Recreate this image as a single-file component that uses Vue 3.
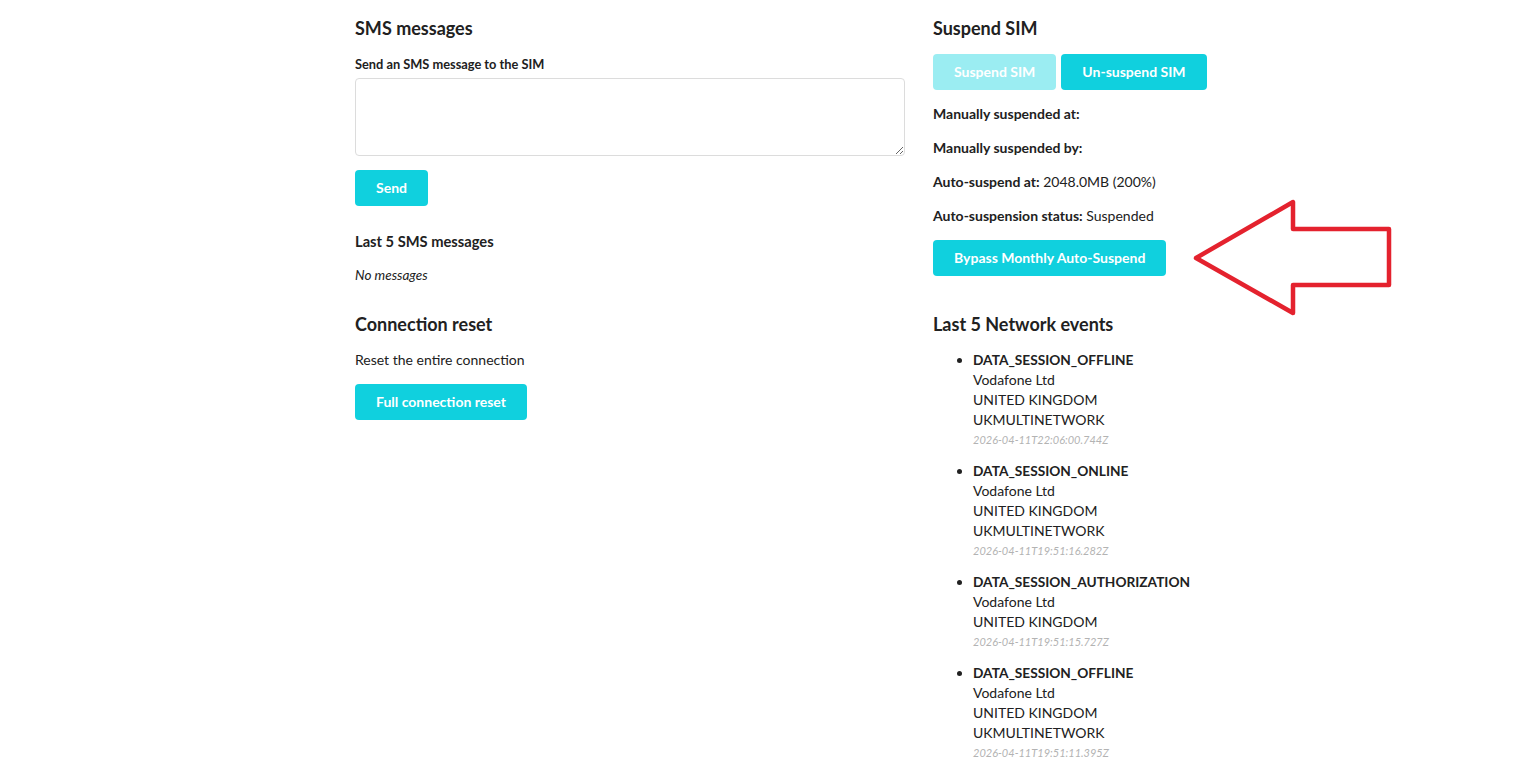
<template>
  <div class="page">
    <div class="columns">
      <section class="col">
        <h3 class="first">SMS messages</h3>
        <label class="field-label">Send an SMS message to the SIM</label>
        <textarea class="sms-input"></textarea>
        <button class="btn send">Send</button>
        <h4>Last 5 SMS messages</h4>
        <p class="empty">No messages</p>
        <h3 class="reset-title">Connection reset</h3>
        <p class="reset-text">Reset the entire connection</p>
        <button class="btn">Full connection reset</button>
      </section>

      <section class="col">
        <h3 class="first">Suspend SIM</h3>
        <div class="btn-row">
          <button class="btn disabled">Suspend SIM</button>
          <button class="btn">Un-suspend SIM</button>
        </div>
        <p v-for="row in suspendInfo" :key="row.label" class="info">
          <strong>{{ row.label }}</strong> {{ row.value }}
        </p>
        <div class="bypass-wrap">
          <button class="btn">Bypass Monthly Auto-Suspend</button>
          <svg class="arrow" width="206" height="126" viewBox="0 0 206 126">
            <path
              d="M7 60 L104 4 L104 31 L200 31 L200 87 L104 87 L104 115 Z"
              fill="none"
              stroke="#e4222e"
              stroke-width="4.5"
              stroke-linejoin="round"
            />
          </svg>
        </div>
        <h3 class="events-title">Last 5 Network events</h3>
        <ul class="events">
          <li v-for="(ev, i) in events" :key="i">
            <strong>{{ ev.type }}</strong>
            <div v-for="line in ev.lines" :key="line">{{ line }}</div>
            <div class="time">{{ ev.time }}</div>
          </li>
        </ul>
      </section>
    </div>
  </div>
</template>

<script setup>
const suspendInfo = [
  { label: "Manually suspended at:", value: "" },
  { label: "Manually suspended by:", value: "" },
  { label: "Auto-suspend at:", value: "2048.0MB (200%)" },
  { label: "Auto-suspension status:", value: "Suspended" },
];

const events = [
  {
    type: "DATA_SESSION_OFFLINE",
    lines: ["Vodafone Ltd", "UNITED KINGDOM", "UKMULTINETWORK"],
    time: "2026-04-11T22:06:00.744Z",
  },
  {
    type: "DATA_SESSION_ONLINE",
    lines: ["Vodafone Ltd", "UNITED KINGDOM", "UKMULTINETWORK"],
    time: "2026-04-11T19:51:16.282Z",
  },
  {
    type: "DATA_SESSION_AUTHORIZATION",
    lines: ["Vodafone Ltd", "UNITED KINGDOM"],
    time: "2026-04-11T19:51:15.727Z",
  },
  {
    type: "DATA_SESSION_OFFLINE",
    lines: ["Vodafone Ltd", "UNITED KINGDOM", "UKMULTINETWORK"],
    time: "2026-04-11T19:51:11.395Z",
  },
];
</script>

<style scoped>
.page {
  font-family: Lato, "Open Sans", sans-serif;
  font-size: 14px;
  line-height: 20px;
  color: #212121;
  padding: 16px 0 0 355px;
}

.columns {
  display: grid;
  grid-template-columns: 550px 550px;
  column-gap: 28px;
}

.col {
  display: flex;
  flex-direction: column;
  align-items: flex-start;
}

h3 {
  font-size: 18px;
  line-height: 24px;
  font-weight: 700;
  margin: 0;
}

h4 {
  font-size: 14.7px;
  line-height: 20px;
  font-weight: 700;
  margin: 25px 0 0;
}

.field-label {
  font-size: 12.8px;
  font-weight: 700;
  margin-top: 14px;
}

.sms-input {
  box-sizing: border-box;
  width: 550px;
  height: 78px;
  margin: 4px 0 0;
  padding: 8px 12px;
  border: 1px solid #dcdcdc;
  border-radius: 4px;
  background: #fff;
  font-family: inherit;
  font-size: 14px;
  outline: none;
  display: block;
}

.btn {
  height: 36px;
  padding: 0 21px;
  border: none;
  border-radius: 4px;
  background: #10d0de;
  color: #fff;
  font-family: inherit;
  font-size: 14px;
  font-weight: 700;
  line-height: 36px;
  white-space: nowrap;
  cursor: pointer;
}

.btn.disabled {
  background: #9bedf2;
  cursor: default;
}

.send {
  margin-top: 14px;
}

.empty {
  font-style: italic;
  font-size: 13.5px;
  margin: 14px 0 0;
}

.reset-title {
  margin-top: 27px;
}

.reset-text {
  margin: 14px 0 0;
  font-size: 14px;
}

.reset-text + .btn {
  margin-top: 14px;
}

.btn-row {
  display: flex;
  gap: 5px;
  margin-top: 14px;
  margin-bottom: 14px;
}

.info {
  font-size: 14px;
  margin: 0 0 14px;
}

.info strong {
  font-weight: 700;
}

.bypass-wrap {
  position: relative;
}

.arrow {
  position: absolute;
  left: 256px;
  top: -42px;
}

.events-title {
  margin-top: 36px;
}

.events {
  list-style: disc;
  margin: 14px 0 0;
  padding-left: 40px;
}

.events li {
  margin-bottom: 11px;
}

.events strong {
  font-weight: 700;
  font-size: 13.7px;
}

.time {
  font-size: 11px;
  font-style: italic;
  color: #b3b3b3;
}
</style>

<style>
html,
body {
  overflow: hidden;
  background: #fff;
}
</style>
